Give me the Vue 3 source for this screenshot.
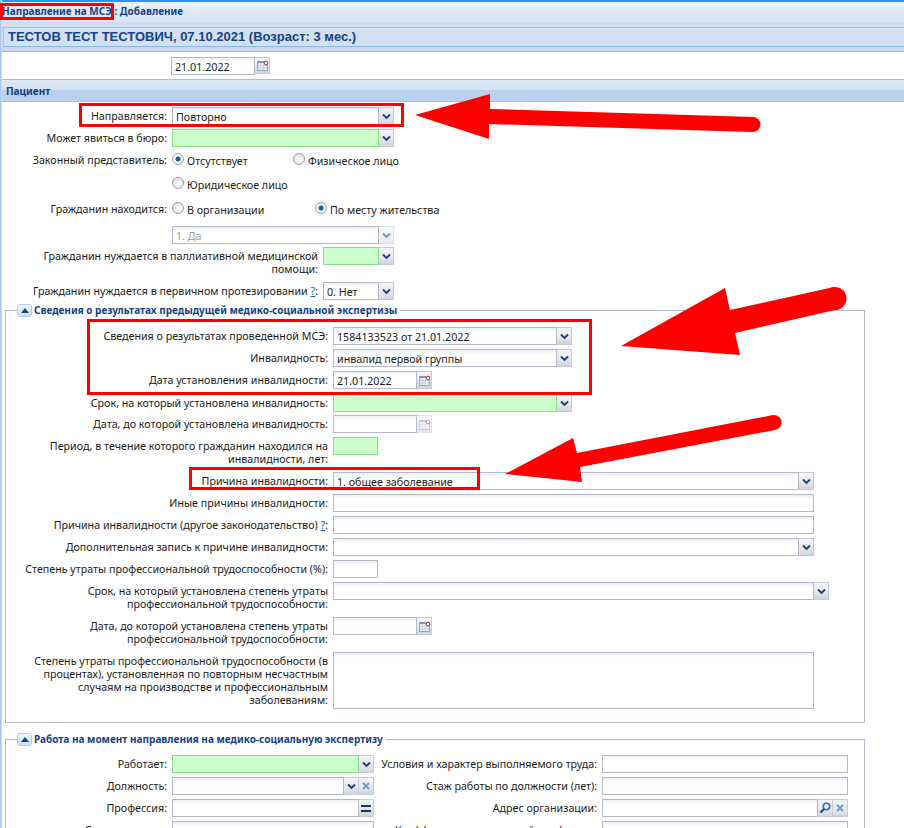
<script setup>
const combo = ['combo']
const date = ['date']
const sections = [
  {
    cls: 'patient',
    rows: [
      { h: 22, cells: [{ lw: 167, label: 'Направляется:', w: 222, value: 'Повторно', t: combo }] },
      { h: 22, cells: [{ lw: 167, label: 'Может явиться в бюро:', w: 222, green: true, t: combo }] },
      { h: 24, cells: [{ lw: 167, label: 'Законный представитель:', radios: [{ text: 'Отсутствует', on: true, w: 121 }, { text: 'Физическое лицо', w: 120 }] }] },
      { h: 25, cells: [{ lw: 167, label: '', radios: [{ text: 'Юридическое лицо', w: 140 }] }] },
      { h: 26, cells: [{ lw: 167, label: 'Гражданин находится:', radios: [{ text: 'В организации', w: 143 }, { text: 'По месту жительства', on: true, w: 140 }] }] },
      { h: 21, cells: [{ lw: 167, label: '', w: 222, value: '1. Да', disabled: true, t: combo }] },
      { h: 35, cells: [{ lw: 318, label: 'Гражданин нуждается в паллиативной медицинской\nпомощи:', w: 71, green: true, t: combo }] },
      { h: 20, cells: [{ lw: 318, label: 'Гражданин нуждается в первичном протезировании ', help: true, w: 71, value: '0. Нет', t: combo }] }
    ]
  },
  {
    legend: 'Сведения о результатах предыдущей медико-социальной экспертизы',
    cls: 'first',
    rows: [
      { h: 22, cells: [{ lw: 322, label: 'Сведения о результатах проведенной МСЭ:', w: 239, value: '1584133523 от 21.01.2022', t: combo }] },
      { h: 22, cells: [{ lw: 322, label: 'Инвалидность:', w: 239, value: 'инвалид первой группы', t: combo }] },
      { h: 23, cells: [{ lw: 322, label: 'Дата установления инвалидности:', w: 99, value: '21.01.2022', t: date }] },
      { h: 21, cells: [{ lw: 322, label: 'Срок, на который установлена инвалидность:', w: 239, green: true, t: combo }] },
      { h: 22, cells: [{ lw: 322, label: 'Дата, до которой установлена инвалидность:', w: 99, t: date, dim: true }] },
      { h: 35, cells: [{ lw: 322, label: 'Период, в течение которого гражданин находился на\nинвалидности, лет:', w: 45, green: true }] },
      { h: 22, cells: [{ lw: 322, label: 'Причина инвалидности:', w: 481, value: '1. общее заболевание', t: combo }] },
      { h: 22, cells: [{ lw: 322, label: 'Иные причины инвалидности:', w: 481 }] },
      { h: 22, cells: [{ lw: 322, label: 'Причина инвалидности (другое законодательство) ', help: true, w: 481 }] },
      { h: 22, cells: [{ lw: 322, label: 'Дополнительная запись к причине инвалидности:', w: 481, t: combo }] },
      { h: 22, cells: [{ lw: 322, label: 'Степень утраты профессиональной трудоспособности (%):', w: 45 }] },
      { h: 35, cells: [{ lw: 322, label: 'Срок, на который установлена степень утраты\nпрофессиональной трудоспособности:', w: 496, t: combo }] },
      { h: 35, cells: [{ lw: 322, label: 'Дата, до которой установлена степень утраты\nпрофессиональной трудоспособности:', w: 99, t: date }] },
      { h: 58, cells: [{ lw: 322, label: 'Степень утраты профессиональной трудоспособности (в\nпроцентах), установленная по повторным несчастным\nслучаям на производстве и профессиональным\nзаболеваниям:', w: 481, area: 57 }] }
    ]
  },
  {
    legend: 'Работа на момент направления на медико-социальную экспертизу',
    cls: 'second',
    rows: [
      { h: 22, cells: [{ lw: 161, label: 'Работает:', w: 202, green: true, t: combo }, { lw: 223, label: 'Условия и характер выполняемого труда:', w: 246 }] },
      { h: 22, cells: [{ lw: 161, label: 'Должность:', w: 202, t: ['combo', 'x'] }, { lw: 223, label: 'Стаж работы по должности (лет):', w: 246 }] },
      { h: 22, cells: [{ lw: 161, label: 'Профессия:', w: 202, t: ['eq'] }, { lw: 223, label: 'Адрес организации:', w: 246, t: ['search', 'x'] }] },
      { h: 22, cells: [{ lw: 161, label: 'Специальность:', w: 202 }, { lw: 223, label: 'Коэффициент занимаемой профессии:', w: 246 }] }
    ]
  }
]
</script>

<template>
  <div class="page">
    <div class="crumbs">Направление на МСЭ : Добавление</div>
    <div class="person"><div class="person-title">ТЕСТОВ ТЕСТ ТЕСТОВИЧ, 07.10.2021 (Возраст: 3 мес.)</div></div>
    <div class="date-row">
      <div class="field date-field">
        <div class="input date-input">21.01.2022</div>
        <span class="trigger">
          <svg width="13" height="13" viewBox="0 0 13 13"><rect x="1.5" y="2.5" width="10" height="9" fill="#eef2f8" stroke="#8fa6c8" /><rect x="1" y="2" width="11" height="2" fill="#7f9cc6" /><path d="M4.5 4v7M7.5 4v7M2 6.5h9M2 9h9" stroke="#c3d0e2" /><circle cx="10" cy="4" r="1.8" fill="#fff" stroke="#b8343c" /></svg>
        </span>
      </div>
    </div>
    <div class="panel-head">Пациент</div>

    <component :is="s.legend ? 'fieldset' : 'div'" v-for="s in sections" :key="s.cls" :class="['section', s.cls]">
      <legend v-if="s.legend" class="legend">
        <span class="collapse"><svg width="8" height="5" viewBox="0 0 8 5"><path d="M0 5 4 0l4 5z" fill="#15428b" /></svg></span>
        <span class="legend-text">{{ s.legend }}</span>
      </legend>
      <div v-for="(r, i) in s.rows" :key="i" class="row" :style="{ height: r.h + 'px' }">
        <template v-for="(c, j) in r.cells" :key="j">
          <div class="label" :style="{ width: c.lw + 'px' }">{{ c.label }}<template v-if="c.help"><a class="help">?</a>:</template></div>
          <div v-if="c.radios" class="radios">
            <div v-for="o in c.radios" :key="o.text" class="radio" :style="{ width: o.w + 'px' }">
              <span :class="['dot', { on: o.on }]"></span><span class="radio-text">{{ o.text }}</span>
            </div>
          </div>
          <div v-else class="field" :style="{ width: c.w + 'px' }">
            <div :class="['input', { green: c.green, off: c.disabled }]" :style="c.area ? { height: c.area + 'px' } : null">{{ c.value }}</div>
            <span v-for="k in c.t" :key="k" :class="['trigger', { faded: c.disabled || c.dim }]">
              <svg v-if="k === 'combo'" width="9" height="7" viewBox="0 0 9 7"><path d="M1 1.5 4.5 5 8 1.5" fill="none" stroke="#1b3f86" stroke-width="1.9" /></svg>
              <svg v-else-if="k === 'date'" width="13" height="13" viewBox="0 0 13 13"><rect x="1.5" y="2.5" width="10" height="9" fill="#eef2f8" stroke="#8fa6c8" /><rect x="1" y="2" width="11" height="2" fill="#7f9cc6" /><path d="M4.5 4v7M7.5 4v7M2 6.5h9M2 9h9" stroke="#c3d0e2" /><circle cx="10" cy="4" r="1.8" fill="#fff" stroke="#b8343c" /></svg>
              <svg v-else-if="k === 'x'" width="8" height="8" viewBox="0 0 8 8"><path d="M1 1l6 6M7 1 1 7" stroke="#6b9ccc" stroke-width="1.8" /></svg>
              <svg v-else-if="k === 'eq'" width="10" height="7" viewBox="0 0 10 7"><path d="M0 1h10M0 6h10" stroke="#1c3560" stroke-width="2" /></svg>
              <svg v-else width="12" height="12" viewBox="0 0 12 12"><circle cx="7.5" cy="4.5" r="3.2" fill="#e4f0fb" stroke="#2f6fb0" stroke-width="1.6" /><path d="M5 7 1.5 10.5" stroke="#1d4f8c" stroke-width="2.2" /></svg>
            </span>
          </div>
        </template>
      </div>
    </component>

    <svg class="overlay" width="904" height="828" viewBox="0 0 904 828">
      <g fill="none" stroke="#f00" stroke-width="3">
        <rect x="1.5" y="4.5" width="111" height="14" />
        <rect x="80.5" y="104.5" width="322" height="21" />
        <rect x="88.5" y="320.5" width="502" height="73" />
        <rect x="190.5" y="468.5" width="288" height="20" />
      </g>
      <g fill="#f00">
        <polygon points="415,115 490,94 490,109 754,117 752,132 489,124 489,139" />
        <circle cx="753" cy="124.5" r="7.5" />
        <polygon points="621,346 725,288 730,310 834,287 835,310 735,333 740,355" />
        <circle cx="835" cy="298.5" r="11.5" />
        <polygon points="505,474 573,438 577,453 773,415 775,430 580,467 582,482" />
        <circle cx="774" cy="422.5" r="7.6" />
      </g>
    </svg>
  </div>
</template>

<style scoped>
.page {
  position: relative;
  width: 904px;
  height: 828px;
  overflow: hidden;
  background: #fff;
  font-family: "Noto Sans", "Liberation Sans", sans-serif;
  font-size: 10.7px;
  color: #1c1c1c;
}
.page::before {
  content: "";
  position: absolute;
  left: 0;
  top: 0;
  bottom: 0;
  width: 2px;
  background: linear-gradient(90deg, #9dbbe8, #d5e3f6);
}
.crumbs {
  box-sizing: border-box;
  height: 27px;
  border-top: 2px solid #2a94f5;
  padding: 2px 0 0 2px;
  background: linear-gradient(180deg, #e8f0fa 0, #d9e6f5 20px, #cfdef2 20px);
  font: bold 10px/15px "Noto Sans", "Liberation Sans", sans-serif;
  color: #15428b;
}
.person {
  box-sizing: border-box;
  height: 25px;
  border-top: 1px solid #a9c0e0;
  border-bottom: 1px solid #a9bbd8;
  background: #c9d9ee;
  padding-left: 3px;
}
.person-title {
  box-sizing: border-box;
  height: 19px;
  border-left: 1px solid #a9c0e0;
  border-bottom: 1px solid #8ab8f0;
  background: #d3e0f1;
  padding-left: 4px;
  font: bold 13px/18px "Liberation Sans", sans-serif;
  color: #15428b;
}
.date-row {
  box-sizing: border-box;
  height: 27px;
  padding: 5px 0 0 171px;
}
.date-field { width: 99px; }
.date-input { height: 17px; line-height: 17px; }
.panel-head {
  box-sizing: border-box;
  height: 23px;
  border-top: 1px solid #a9c0e0;
  border-bottom: 1px solid #a3bce0;
  padding-left: 6px;
  background: linear-gradient(180deg, #dfeaf7 0, #d2e1f3 10px, #b9cfec 10px, #bcd1ed 100%);
  font: bold 10px/22px "Noto Sans", "Liberation Sans", sans-serif;
  color: #15428b;
}
.section { box-sizing: border-box; }
.patient { padding-top: 5px; }
fieldset.section {
  margin: 0 39px 8px 5px;
  min-width: 0;
  width: 860px;
  border: 1px solid #b5b8c8;
  padding: 9px 0 12px;
}
fieldset.second { padding-top: 8px; margin-top: 0; }
.legend {
  display: flex;
  align-items: center;
  height: 16px;
  margin-left: 11px;
  padding: 0 3px 0 0;
}
.collapse {
  box-sizing: border-box;
  display: flex;
  align-items: center;
  justify-content: center;
  width: 15px;
  height: 13px;
  border: 1px solid #b3cbec;
  border-radius: 3px;
  background: linear-gradient(180deg, #f0f6fd, #cfe0f6);
}
.legend-text {
  margin-left: 2px;
  font: bold 10px/14px "Noto Sans", "Liberation Sans", sans-serif;
  color: #15428b;
  white-space: nowrap;
}
.row { display: flex; align-items: flex-start; }
.label {
  flex: none;
  box-sizing: border-box;
  padding-top: 3px;
  text-align: right;
  line-height: 13px;
  white-space: pre-line;
  margin-right: 5px;
}
.help { color: #1166bb; text-decoration: underline; }
.field { display: flex; flex: none; }
.input {
  box-sizing: border-box;
  flex: 1;
  min-width: 0;
  height: 18px;
  border: 1px solid #b5b8c8;
  padding: 0 3px;
  background: linear-gradient(180deg, #eceef2 0, #fff 4px);
  line-height: 18px;
  white-space: nowrap;
}
.input.green { border-color: #86e086; background: #ccffcc; }
.input.off { color: #999; }
.trigger {
  box-sizing: border-box;
  flex: none;
  display: flex;
  align-items: center;
  justify-content: center;
  width: 15px;
  height: 18px;
  border: 1px solid #c6c9d6;
  border-left: 0;
  background: linear-gradient(180deg, #f4f5f8 0, #e8eaee 50%, #d3d5da 100%);
}
.date-row .trigger { height: 17px; }
.trigger.faded { opacity: 0.55; }
.radios { display: flex; }
.radio { display: flex; align-items: flex-start; }
.dot {
  box-sizing: border-box;
  flex: none;
  display: block;
  width: 12px;
  height: 12px;
  margin-top: 2px;
  border: 1px solid #9a9fa8;
  border-radius: 50%;
  background: radial-gradient(circle at 60% 60%, #fff 0, #e4e6ea 70%, #c9ccd2 100%);
}
.dot.on { background: radial-gradient(circle, #0f63a8 0, #0f63a8 32%, #fff 40%, #e4e6ea 100%); }
.radio-text { margin: 4px 0 0 3px; line-height: 13px; }
.overlay { position: absolute; left: 0; top: 0; pointer-events: none; }
</style>
